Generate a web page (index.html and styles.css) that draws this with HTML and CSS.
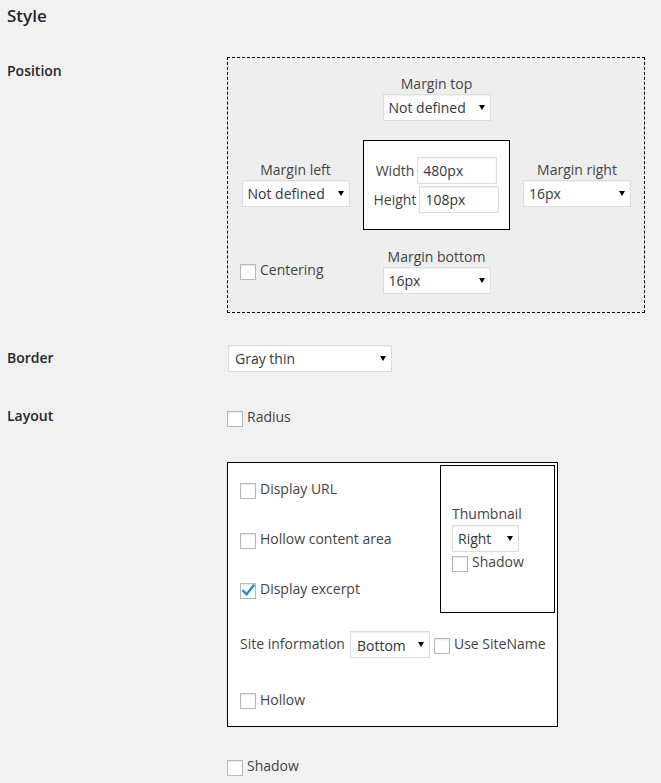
FILE: index.html
```html
<!DOCTYPE html>
<html>
<head>
<meta charset="utf-8">
<title>Style</title>
<link rel="stylesheet" href="styles.css">
</head>
<body>
<div class="wrap">
  <h2 class="title">Style</h2>
  <div class="form">
    <div class="th">Position</div>
    <div class="td td-pos">
      <div class="pos-box">
        <div class="cell stack r1 c2">
          <div class="lbl">Margin top</div>
          <span class="sel w108"><select><option>Not defined</option></select></span>
        </div>
        <div class="cell stack r2 c1">
          <div class="lbl">Margin left</div>
          <span class="sel w108"><select><option>Not defined</option></select></span>
        </div>
        <div class="size-box r2 c2">
          <div class="size-row"><span>Width</span><input class="txt" type="text" value="480px"></div>
          <div class="size-row"><span>Height</span><input class="txt" type="text" value="108px"></div>
        </div>
        <div class="cell stack r2 c3">
          <div class="lbl">Margin right</div>
          <span class="sel w108"><select><option>16px</option></select></span>
        </div>
        <div class="cell left r3 c1">
          <label class="chk"><span class="box"></span>Centering</label>
        </div>
        <div class="cell stack r3 c2">
          <div class="lbl">Margin bottom</div>
          <span class="sel w108"><select><option>16px</option></select></span>
        </div>
      </div>
    </div>

    <div class="th">Border</div>
    <div class="td td-border">
      <span class="sel w164 border-sel"><select><option>Gray thin</option></select></span>
    </div>

    <div class="th">Layout</div>
    <div class="td td-layout">
      <label class="chk radius"><span class="box"></span>Radius</label>
      <div class="lay-box">
        <div class="lay-cell lr1"><label class="chk"><span class="box"></span>Display URL</label></div>
        <div class="lay-cell lr2"><label class="chk"><span class="box"></span>Hollow content area</label></div>
        <div class="lay-cell lr3"><label class="chk"><span class="box"><svg width="14" height="14" viewBox="0 0 14 14"><path d="M1.4 6.2 L5.6 10.2 L13.2 0.8" fill="none" stroke="#1e8cbe" stroke-width="2.3"/></svg></span>Display excerpt</label></div>
        <div class="thumb">
          <div class="lbl">Thumbnail</div>
          <span class="sel w67 thumb-sel"><select><option>Right</option></select></span>
          <label class="chk"><span class="box"></span>Shadow</label>
        </div>
        <div class="lay-cell site">
          <span class="site-lbl">Site information</span>
          <span class="sel w80 site-sel"><select><option>Bottom</option></select></span>
          <label class="chk site-chk"><span class="box"></span>Use SiteName</label>
        </div>
        <div class="lay-cell lr5"><label class="chk"><span class="box"></span>Hollow</label></div>
      </div>
      <label class="chk shadow"><span class="box"></span>Shadow</label>
    </div>
  </div>
</div>
</body>
</html>
```

FILE: styles.css
```css
html, body {
  margin: 0;
  padding: 0;
  background: #f1f1f1;
}

body {
  font-family: "Open Sans", "DejaVu Sans", sans-serif;
  font-size: 14px;
  color: #444;
}

.wrap {
  padding: 4px 0 0 7px;
}

.title {
  margin: 0;
  font-size: 17px;
  line-height: 23px;
  font-weight: 600;
  color: #23282d;
}

.form {
  display: grid;
  grid-template-columns: 220px auto;
  margin-top: 15px;
  align-items: start;
}

.th {
  padding-top: 20px;
  font-weight: 600;
  line-height: 1.3;
  color: #23282d;
}

.td {
  padding: 15px 0;
}

.td-pos {
  padding-bottom: 16px;
}

.td-border {
  padding-top: 16px;
}

/* Position box */
.pos-box {
  display: grid;
  grid-template-columns: 135px 147px 134px;
  grid-template-rows: 82px 90px 82px;
  border: 1px dashed #000;
  background: #eee;
  width: max-content;
}

.r1 { grid-row: 1; padding-bottom: 3px; }
.r2 { grid-row: 2; padding-bottom: 4px; }
.r3 { grid-row: 3; padding-bottom: 2px; }
.c1 { grid-column: 1; }
.c2 { grid-column: 2; }
.c3 { grid-column: 3; }

.stack {
  display: flex;
  flex-direction: column;
  align-items: center;
  justify-content: center;
}

.left {
  display: flex;
  align-items: center;
  padding-left: 12px;
}

.lbl {
  line-height: 20px;
}

.size-box {
  padding-bottom: 0;
  border: 1px solid #000;
  background: #fff;
  display: flex;
  flex-direction: column;
  justify-content: center;
  gap: 2px;
}

.size-row {
  display: flex;
  justify-content: center;
  align-items: center;
  gap: 3px;
  line-height: 20px;
}

.txt {
  width: 80px;
  height: 27px;
  box-sizing: border-box;
  margin: 0;
  padding: 0 5px;
  border: 1px solid #ddd;
  border-radius: 0;
  box-shadow: inset 0 1px 2px rgba(0, 0, 0, 0.07);
  background: #fff;
  font-family: "Open Sans", "DejaVu Sans", sans-serif;
  font-size: 14px;
  color: #32373c;
  outline: none;
}

/* Selects */
.sel {
  position: relative;
  display: inline-block;
}

.sel select {
  -webkit-appearance: none;
  appearance: none;
  display: block;
  width: 100%;
  height: 27px;
  box-sizing: border-box;
  margin: 0;
  padding: 0 5px;
  border: 1px solid #ddd;
  border-radius: 0;
  box-shadow: inset 0 1px 2px rgba(0, 0, 0, 0.07);
  background: #fff;
  font-family: "Open Sans", "DejaVu Sans", sans-serif;
  font-size: 14px;
  color: #32373c;
  outline: none;
}

.sel::after {
  content: "";
  position: absolute;
  right: 6px;
  top: 50%;
  margin-top: -2.5px;
  border-left: 3px solid transparent;
  border-right: 3px solid transparent;
  border-top: 5px solid #000;
  pointer-events: none;
}

.w108 { width: 108px; }
.w164 { width: 164px; }
.w80 { width: 80px; }
.w67 { width: 67px; }

.border-sel { margin-left: 1px; }
.border-sel select { padding-left: 6px; }
.site-sel select { padding-left: 6px; padding-top: 2px; }

/* Checkboxes */
.chk {
  display: inline-flex;
  align-items: center;
  gap: 4px;
  line-height: 20px;
  white-space: nowrap;
}

.box {
  width: 16px;
  height: 16px;
  box-sizing: border-box;
  margin-top: 3px;
  border: 1px solid #b4b9be;
  background: #fff;
  box-shadow: inset 0 1px 2px rgba(0, 0, 0, 0.1);
  display: inline-flex;
  flex: none;
  overflow: visible;
}

.box svg {
  display: block;
  overflow: visible;
}

/* Layout */
.td-layout {
  display: flex;
  flex-direction: column;
  align-items: flex-start;
}

.radius {
  margin-top: 5px;
}

.lay-box {
  margin-top: 35px;
  display: grid;
  grid-template-columns: 208px 115px;
  grid-template-rows: 48px 48px 48px 58px 49px;
  gap: 2px;
  padding: 2px;
  border: 1px solid #000;
  background: #fff;
}

.lay-cell {
  display: flex;
  align-items: center;
  padding-left: 10px;
}

.lr1 { grid-column: 1; grid-row: 1; }
.lr2 { grid-column: 1; grid-row: 2; }
.lr3 { grid-column: 1; grid-row: 3; }
.lr5 { grid-column: 1 / span 2; grid-row: 5; }

.thumb {
  grid-column: 2;
  grid-row: 1 / span 3;
  border: 1px solid #000;
  display: flex;
  flex-direction: column;
  justify-content: center;
  align-items: flex-start;
  padding: 0 0 2px 11px;
}

.thumb-sel {
  margin-top: 1px;
}

.site {
  grid-column: 1 / span 2;
  grid-row: 4;
}

.site-lbl {
  line-height: 20px;
}

.site-sel {
  margin-left: 5px;
}

.site-chk {
  margin-left: 4px;
}

.shadow {
  margin-top: 29px;
}
```
